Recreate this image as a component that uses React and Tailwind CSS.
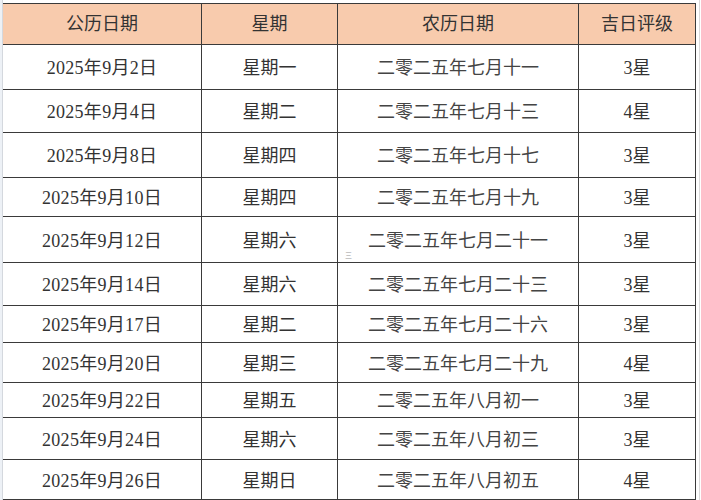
const rows = [
  { h: 'h-[45px]', solar: '2025年9月2日', week: '星期一', lunar: '二零二五年七月十一', star: '3星' },
  { h: 'h-[43px]', solar: '2025年9月4日', week: '星期二', lunar: '二零二五年七月十三', star: '4星' },
  { h: 'h-[45px]', solar: '2025年9月8日', week: '星期四', lunar: '二零二五年七月十七', star: '3星' },
  { h: 'h-[39px]', solar: '2025年9月10日', week: '星期四', lunar: '二零二五年七月十九', star: '3星' },
  { h: 'h-[46px]', solar: '2025年9月12日', week: '星期六', lunar: '二零二五年七月二十一', star: '3星', mark: true },
  { h: 'h-[43px]', solar: '2025年9月14日', week: '星期六', lunar: '二零二五年七月二十三', star: '3星' },
  { h: 'h-[37px]', solar: '2025年9月17日', week: '星期二', lunar: '二零二五年七月二十六', star: '3星' },
  { h: 'h-[40px]', solar: '2025年9月20日', week: '星期三', lunar: '二零二五年七月二十九', star: '4星' },
  { h: 'h-[35px]', solar: '2025年9月22日', week: '星期五', lunar: '二零二五年八月初一', star: '3星' },
  { h: 'h-[42px]', solar: '2025年9月24日', week: '星期六', lunar: '二零二五年八月初三', star: '3星' },
  { h: 'h-[40px]', solar: '2025年9月26日', week: '星期日', lunar: '二零二五年八月初五', star: '4星' },
]

const cell = 'flex items-center justify-center border-r border-b border-[#3a3a3a]'

export default function App() {
  return (
    <div
      className="w-[701px] h-[500px] bg-white flex overflow-hidden text-[18px] text-[#333]"
      style={{ fontFamily: '"Liberation Serif", "Noto Sans CJK SC", serif' }}
    >
      <div className="w-[3px] bg-[#edf1f6] border-r border-[#d4d8de]" />

      <div className="flex flex-col pt-[3px]">
        <div className="grid grid-cols-[199px_136px_241px_117px] border-t border-[#3a3a3a]">
          <div className={`${cell} h-[41px] bg-[#f8cbad]`}>公历日期</div>
          <div className={`${cell} h-[41px] bg-[#f8cbad]`}>星期</div>
          <div className={`${cell} h-[41px] bg-[#f8cbad]`}>农历日期</div>
          <div className={`${cell} h-[41px] bg-[#f8cbad]`}>吉日评级</div>

          {rows.map((r) => (
            <Row key={r.solar} r={r} />
          ))}
        </div>
      </div>

      <div className="w-[3px]" />
      <div className="w-px bg-[#d9d9d9]" />
    </div>
  )
}

function Row({ r }) {
  return (
    <>
      <div className={`${cell} ${r.h} pt-[3px] tracking-[0.3px]`}>{r.solar}</div>
      <div className={`${cell} ${r.h} pt-[3px]`}>{r.week}</div>
      <div className={`${cell} ${r.h} pt-[3px] relative text-[#444]`}>
        {r.lunar}
        {r.mark && (
          <span className="absolute left-[7px] bottom-[2px] text-[7px] leading-none text-[#999]">三</span>
        )}
      </div>
      <div className={`${cell} ${r.h} pt-[3px]`}>{r.star}</div>
    </>
  )
}
